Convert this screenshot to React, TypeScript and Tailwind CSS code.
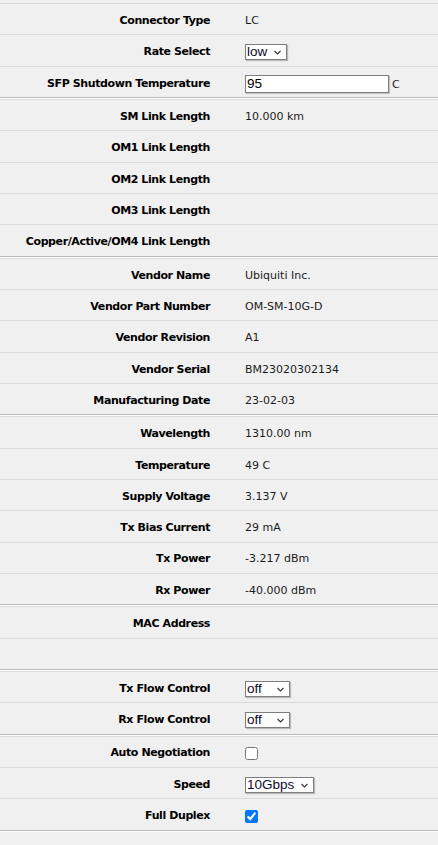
import React from 'react'

type Row = {
  label: string
  value?: string
  select?: { value: string; width: string }
  input?: { value: string; unit: string }
  check?: boolean
}

const sections: Row[][] = [
  [
    { label: 'Connector Type', value: 'LC' },
    { label: 'Rate Select', select: { value: 'low', width: 'w-[42px]' } },
    { label: 'SFP Shutdown Temperature', input: { value: '95', unit: 'C' } },
  ],
  [
    { label: 'SM Link Length', value: '10.000 km' },
    { label: 'OM1 Link Length' },
    { label: 'OM2 Link Length' },
    { label: 'OM3 Link Length' },
    { label: 'Copper/Active/OM4 Link Length' },
  ],
  [
    { label: 'Vendor Name', value: 'Ubiquiti Inc.' },
    { label: 'Vendor Part Number', value: 'OM-SM-10G-D' },
    { label: 'Vendor Revision', value: 'A1' },
    { label: 'Vendor Serial', value: 'BM23020302134' },
    { label: 'Manufacturing Date', value: '23-02-03' },
  ],
  [
    { label: 'Wavelength', value: '1310.00 nm' },
    { label: 'Temperature', value: '49 C' },
    { label: 'Supply Voltage', value: '3.137 V' },
    { label: 'Tx Bias Current', value: '29 mA' },
    { label: 'Tx Power', value: '-3.217 dBm' },
    { label: 'Rx Power', value: '-40.000 dBm' },
  ],
  [{ label: 'MAC Address' }, { label: '' }],
  [
    { label: 'Tx Flow Control', select: { value: 'off', width: 'w-[45px]' } },
    { label: 'Rx Flow Control', select: { value: 'off', width: 'w-[45px]' } },
  ],
  [
    { label: 'Auto Negotiation', check: false },
    { label: 'Speed', select: { value: '10Gbps', width: 'w-[69px]' } },
    { label: 'Full Duplex', check: true },
  ],
]

// small dropdown, looks like the old webfig select
const Dropdown = ({ value, width }: { value: string; width: string }) => (
  <div
    className={`relative ${width} h-[16px] bg-white border border-[#7d7d7d] shadow-[1px_1px_1px_rgba(0,0,0,0.22)]`}
  >
    <select
      defaultValue={value}
      className="appearance-none w-full h-full pl-[1px] text-[13.5px] leading-[14px] text-[#0b0b2a] font-['Liberation_Sans',Arial,sans-serif] outline-none"
    >
      <option value={value}>{value}</option>
    </select>
    <svg
      className="absolute right-[5px] top-[5px] pointer-events-none"
      width="7"
      height="5"
      viewBox="0 0 7 5"
    >
      <path d="M0.5 1 L3.5 4 L6.5 1" fill="none" stroke="#333" strokeWidth="1.1" />
    </svg>
  </div>
)

const App = () => {
  return (
    <div className="min-h-[845px] bg-[#f0f0f0] pt-[3px] font-['DejaVu_Sans',Verdana,sans-serif] text-[11px]">
      {sections.map((rows, s) => (
        <div key={s} className="border-b border-[#b9b9b9] shadow-[0_1px_0_#ffffff] mb-[1px]">
          {rows.map((row, i) => (
            <div
              key={i}
              className="flex items-center h-[31.33px] pt-[4px] border-t border-[#dadada]"
            >
              <div className="w-[210px] shrink-0 text-right font-bold text-black tracking-[-0.4px]">
                {row.label}
              </div>
              <div className="pl-[35px] flex items-center text-[#1c1c1c]">
                {row.value && <span>{row.value}</span>}
                {row.select && <Dropdown value={row.select.value} width={row.select.width} />}
                {row.input && (
                  <>
                    <input
                      defaultValue={row.input.value}
                      className="w-[144px] h-[18px] bg-white border border-[#7d7d7d] shadow-[1px_1px_1px_rgba(0,0,0,0.18)] pl-[1px] text-[13.5px] text-black font-['Liberation_Sans',Arial,sans-serif] outline-none"
                    />
                    <span className="ml-[3px] mt-[3px]">{row.input.unit}</span>
                  </>
                )}
                {row.check !== undefined && (
                  <input
                    type="checkbox"
                    defaultChecked={row.check}
                    className="w-[13px] h-[13px] m-0"
                  />
                )}
              </div>
            </div>
          ))}
        </div>
      ))}
    </div>
  )
}

export default App
